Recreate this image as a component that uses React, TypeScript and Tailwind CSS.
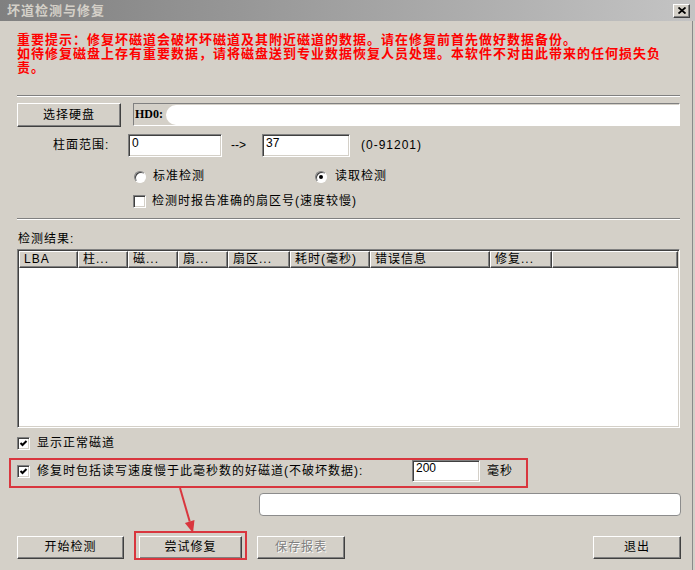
import React from 'react';

// Win2000-style bevels
const raised =
  'border border-t-white border-l-white border-r-[#404040] border-b-[#404040] shadow-[inset_-1px_-1px_0_#808080] bg-[#d4d0c8]';
const sunken =
  'border border-t-[#808080] border-l-[#808080] border-r-white border-b-white shadow-[inset_1px_1px_0_#404040,inset_-1px_-1px_0_#d4d0c8]';

function Check({ checked }: { checked?: boolean }) {
  return (
    <span className={`w-[13px] h-[13px] p-[1px] bg-white ${sunken} flex items-center justify-center shrink-0`}>
      {checked && (
        <svg width="9" height="9" viewBox="0 0 9 9">
          <polyline points="1.5,4 3.5,6 7.5,2" fill="none" stroke="#000" strokeWidth="2" />
        </svg>
      )}
    </span>
  );
}

function Radio({ checked }: { checked?: boolean }) {
  return (
    <span className="w-[12px] h-[12px] rounded-full border border-t-[#808080] border-l-[#808080] border-r-white border-b-white bg-white shadow-[inset_1px_1px_0_#404040] flex items-center justify-center shrink-0">
      {checked && <span className="w-[4px] h-[4px] rounded-full bg-black" />}
    </span>
  );
}

function Btn({ label, width, disabled }: { label: string; width: string; disabled?: boolean }) {
  return (
    <button
      className={`${raised} ${width} h-[23px] flex items-center justify-center text-[12px] leading-[13px] tracking-[1px] ${
        disabled ? 'text-[#808080] [text-shadow:1px_1px_0_#fff]' : 'text-black'
      }`}
    >
      {label}
    </button>
  );
}

const headers = [
  { t: 'LBA', w: 'w-[59px]' },
  { t: '柱...', w: 'w-[50px]' },
  { t: '磁...', w: 'w-[50px]' },
  { t: '扇...', w: 'w-[50px]' },
  { t: '扇区...', w: 'w-[62px]' },
  { t: '耗时(毫秒)', w: 'w-[80px]' },
  { t: '错误信息', w: 'w-[120px]' },
  { t: '修复...', w: 'w-[62px]' },
];

export default function App() {
  return (
    <div className="relative w-[695px] h-[570px] bg-[#d4d0c8] overflow-hidden font-['Liberation_Sans','Noto_Sans_CJK_SC',sans-serif] text-black">
      {/* Title bar */}
      <div className="h-[21px] flex items-center justify-between pl-[7px] pr-[5px] bg-linear-to-r from-[#808080] to-[#c4c4c4]">
        <span className="text-[13px] leading-[13px] font-bold tracking-[1px] text-[#d4d0c8]">坏道检测与修复</span>
        <span className={`${raised} w-[17px] h-[14px] flex items-center justify-center`}>
          <svg width="8" height="7" viewBox="0 0 8 7">
            <path d="M0.5 0.5 L7.5 6.5 M7.5 0.5 L0.5 6.5" stroke="#000" strokeWidth="1.8" />
          </svg>
        </span>
      </div>

      {/* Body */}
      <div className="w-[693px] h-[549px] border-r border-[#8a8a8a] pl-[17px] pr-[12px] pt-[12px] flex flex-col">
        <div className="w-[650px] text-[13px] leading-[14px] font-bold tracking-[1px] text-[#f00]">
          重要提示：修复坏磁道会破坏坏磁道及其附近磁道的数据。请在修复前首先做好数据备份。
          <br />
          如待修复磁盘上存有重要数据，请将磁盘送到专业数据恢复人员处理。本软件不对由此带来的任何损失负责。
        </div>

        <div className="mt-[20px] h-[2px] border-t border-b border-t-[#808080] border-b-white" />

        {/* Disk row */}
        <div className="mt-[6px] flex items-start">
          <Btn label="选择硬盘" width="w-[104px] !h-[24px]" />
          <div className="ml-[12px] flex-1 h-[23px] border border-t-[#808080] border-l-[#808080] border-r-white border-b-white flex items-center overflow-hidden">
            <span className="pl-[1px] text-[12px] leading-[13px] font-bold font-['Liberation_Serif',serif]">HD0:</span>
            <span className="ml-[3px] h-[20px] flex-1 rounded-l-full rounded-r-[8px] bg-white" />
          </div>
        </div>

        {/* Cylinder range */}
        <div className="mt-[7px] flex items-center h-[23px] text-[12px] leading-[13px]">
          <span className="w-[111px] pl-[36px] tracking-[1px]">柱面范围:</span>
          <div className={`${sunken} bg-white w-[94px] h-[23px] pl-[3px] pt-[2px] p-[1px]`}>0</div>
          <span className="w-[40px] pl-[9px]">--&gt;</span>
          <div className={`${sunken} bg-white w-[88px] h-[23px] pl-[3px] pt-[2px] p-[1px]`}>37</div>
          <span className="ml-[11px] tracking-[1px]">(0-91201)</span>
        </div>

        {/* Radios */}
        <div className="mt-[13px] h-[13px] flex items-center pl-[117px] text-[12px] leading-[13px] tracking-[1px]">
          <span className="w-[181px] flex items-center">
            <Radio />
            <span className="ml-[7px]">标准检测</span>
          </span>
          <Radio checked />
          <span className="ml-[8px]">读取检测</span>
        </div>

        <div className="mt-[12px] h-[13px] flex items-center pl-[116px] text-[12px] leading-[13px] tracking-[1px]">
          <Check />
          <span className="ml-[6px]">检测时报告准确的扇区号(速度较慢)</span>
        </div>

        <div className="mt-[10px] h-[2px] border-t border-b border-t-[#808080] border-b-white" />

        <div className="mt-[13px] text-[12px] leading-[13px] tracking-[1px] pl-[1px]">检测结果:</div>

        {/* Result list */}
        <div className={`mt-[3px] h-[179px] p-[1px] bg-white ${sunken}`}>
          <div className="flex h-[17px] text-[12px] leading-[13px] tracking-[1px]">
            {headers.map((h) => (
              <div key={h.t} className={`${raised} ${h.w} shrink-0 flex items-center pl-[4px] overflow-hidden whitespace-nowrap`}>
                {h.t}
              </div>
            ))}
            <div className={`${raised} flex-1`} />
          </div>
        </div>

        <div className="mt-[9px] h-[13px] flex items-center text-[12px] leading-[13px] tracking-[1px]">
          <Check checked />
          <span className="ml-[7px]">显示正常磁道</span>
        </div>

        {/* Slow-track option, annotated */}
        <div className="relative mt-[10px] h-[22px] flex items-center text-[12px] leading-[13px] tracking-[1px]">
          <Check checked />
          <span className="ml-[7px] w-[375px] whitespace-nowrap">修复时包括读写速度慢于此毫秒数的好磁道(不破坏数据):</span>
          <div className={`${sunken} bg-white w-[68px] h-[22px] pl-[3px] pt-[1px] p-[1px] tracking-normal`}>200</div>
          <span className="ml-[7px]">毫秒</span>
          <div className="absolute -left-[8px] -top-[2px] w-[519px] h-[30px] border-2 border-[#d9363e]" />
        </div>

        <div className="mt-[11px] ml-[242px] w-[422px] h-[23px] rounded-[4px] border border-[#8c8c8c] bg-white" />

        {/* Buttons */}
        <div className="mt-[20px] flex items-center">
          <Btn label="开始检测" width="w-[107px]" />
          <div className="relative ml-[15px]">
            <Btn label="尝试修复" width="w-[103px]" />
            <div className="absolute -left-[5px] -top-[5px] w-[113px] h-[29px] border-2 border-[#d9363e]" />
          </div>
          <div className="ml-[15px]">
            <Btn label="保存报表" width="w-[88px]" disabled />
          </div>
          <div className="ml-auto -mr-[1px]">
            <Btn label="退出" width="w-[88px]" />
          </div>
        </div>
      </div>

      {/* Annotation arrow */}
      <svg className="absolute left-0 top-0 pointer-events-none" width="695" height="570">
        <line x1="180" y1="488" x2="189.7" y2="521.5" stroke="#d9363e" strokeWidth="2" />
        <polygon points="194.5,520.1 184.9,522.9 193,533" fill="#d9363e" />
      </svg>
    </div>
  );
}
